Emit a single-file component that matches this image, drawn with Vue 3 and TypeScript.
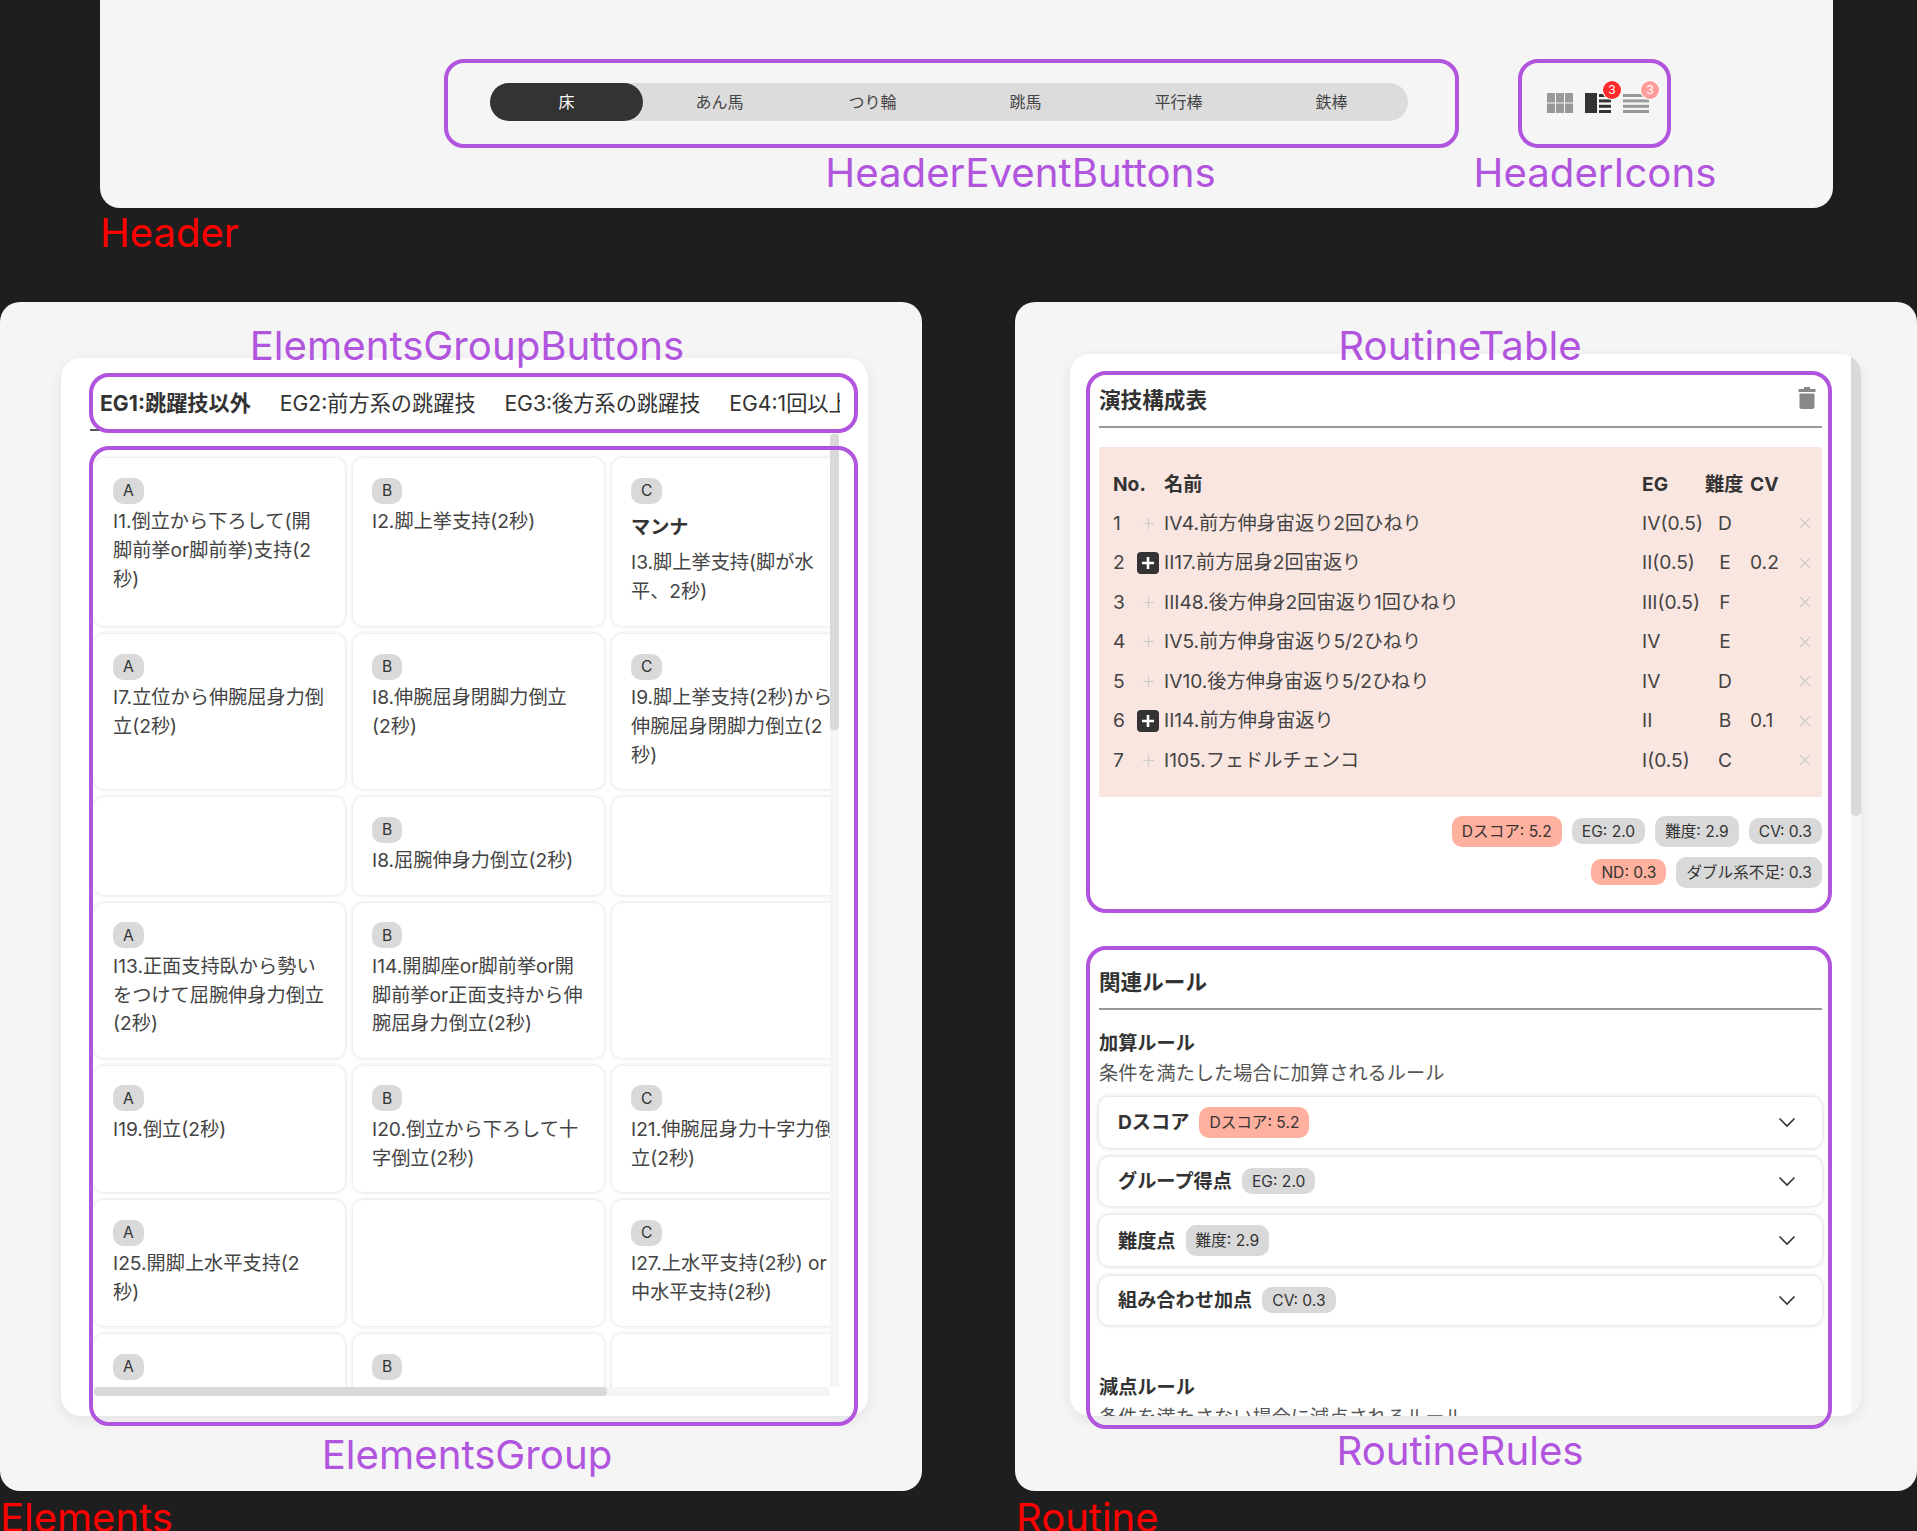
<script setup lang="ts">
// Gymnastics routine editor, annotated wireframe: panels plus purple/red callouts on top.
interface Skill {
  grade: string;
  text: string;
  name?: string;
}
interface RoutineRow {
  no: number;
  linked: boolean;
  name: string;
  eg: string;
  diff: string;
  cv: string;
}
interface Chip {
  label: string;
  hot?: boolean;
  tall?: boolean;
}

const events = ['床', 'あん馬', 'つり輪', '跳馬', '平行棒', '鉄棒'];
const tabs = ['EG1:跳躍技以外', 'EG2:前方系の跳躍技', 'EG3:後方系の跳躍技', 'EG4:1回以上のひねりを伴う技'];

const skillRows: (Skill | null)[][] = [
  [
    { grade: 'A', text: 'I1.倒立から下ろして(開脚前挙or脚前挙)支持(2秒)' },
    { grade: 'B', text: 'I2.脚上挙支持(2秒)' },
    { grade: 'C', name: 'マンナ', text: 'I3.脚上挙支持(脚が水平、2秒)' },
  ],
  [
    { grade: 'A', text: 'I7.立位から伸腕屈身力倒立(2秒)' },
    { grade: 'B', text: 'I8.伸腕屈身閉脚力倒立(2秒)' },
    { grade: 'C', text: 'I9.脚上挙支持(2秒)から伸腕屈身閉脚力倒立(2秒)' },
  ],
  [null, { grade: 'B', text: 'I8.屈腕伸身力倒立(2秒)' }, null],
  [
    { grade: 'A', text: 'I13.正面支持臥から勢いをつけて屈腕伸身力倒立(2秒)' },
    { grade: 'B', text: 'I14.開脚座or脚前挙or開脚前挙or正面支持から伸腕屈身力倒立(2秒)' },
    null,
  ],
  [
    { grade: 'A', text: 'I19.倒立(2秒)' },
    { grade: 'B', text: 'I20.倒立から下ろして十字倒立(2秒)' },
    { grade: 'C', text: 'I21.伸腕屈身力十字力倒立(2秒)' },
  ],
  [
    { grade: 'A', text: 'I25.開脚上水平支持(2秒)' },
    null,
    { grade: 'C', text: 'I27.上水平支持(2秒) or 中水平支持(2秒)' },
  ],
  [{ grade: 'A', text: '' }, { grade: 'B', text: '' }, null],
];

const routine: RoutineRow[] = [
  { no: 1, linked: false, name: 'IV4.前方伸身宙返り2回ひねり', eg: 'IV(0.5)', diff: 'D', cv: '' },
  { no: 2, linked: true, name: 'II17.前方屈身2回宙返り', eg: 'II(0.5)', diff: 'E', cv: '0.2' },
  { no: 3, linked: false, name: 'III48.後方伸身2回宙返り1回ひねり', eg: 'III(0.5)', diff: 'F', cv: '' },
  { no: 4, linked: false, name: 'IV5.前方伸身宙返り5/2ひねり', eg: 'IV', diff: 'E', cv: '' },
  { no: 5, linked: false, name: 'IV10.後方伸身宙返り5/2ひねり', eg: 'IV', diff: 'D', cv: '' },
  { no: 6, linked: true, name: 'II14.前方伸身宙返り', eg: 'II', diff: 'B', cv: '0.1' },
  { no: 7, linked: false, name: 'I105.フェドルチェンコ', eg: 'I(0.5)', diff: 'C', cv: '' },
];

const scoreChips: Chip[] = [
  { label: 'Dスコア: 5.2', hot: true, tall: true },
  { label: 'EG: 2.0' },
  { label: '難度: 2.9', tall: true },
  { label: 'CV: 0.3' },
];
const penaltyChips: Chip[] = [{ label: 'ND: 0.3', hot: true }, { label: 'ダブル系不足: 0.3', tall: true }];

const rules: { title: string; chip: Chip }[] = [
  { title: 'Dスコア', chip: scoreChips[0] },
  { title: 'グループ得点', chip: scoreChips[1] },
  { title: '難度点', chip: scoreChips[2] },
  { title: '組み合わせ加点', chip: scoreChips[3] },
];
</script>

<template>
  <div class="page">
    <header class="header">
      <nav class="events">
        <button v-for="(ev, i) in events" :key="ev" class="event" :class="{ active: i === 0 }">{{ ev }}</button>
      </nav>
      <div class="mode-icons">
        <svg class="mode" width="26" height="20" viewBox="0 0 26 20" fill="#999">
          <rect x="0" y="0" width="8" height="9.5" /><rect x="9" y="0" width="8" height="9.5" /><rect x="18" y="0" width="8" height="9.5" />
          <rect x="0" y="10.5" width="8" height="9.5" /><rect x="9" y="10.5" width="8" height="9.5" /><rect x="18" y="10.5" width="8" height="9.5" />
        </svg>
        <div class="mode-wrap">
          <svg class="mode" width="26" height="20" viewBox="0 0 26 20" fill="#333">
            <rect x="0" y="0" width="12" height="20" />
            <rect x="14" y="1" width="12" height="3" /><rect x="14" y="6.4" width="12" height="3" />
            <rect x="14" y="11.8" width="12" height="3" /><rect x="14" y="17" width="12" height="3" />
          </svg>
          <span class="count">3</span>
        </div>
        <div class="mode-wrap">
          <svg class="mode" width="26" height="20" viewBox="0 0 26 20" fill="#999">
            <rect x="0" y="1" width="26" height="3" /><rect x="0" y="6.4" width="26" height="3" />
            <rect x="0" y="11.8" width="26" height="3" /><rect x="0" y="17" width="26" height="3" />
          </svg>
          <span class="count soft">3</span>
        </div>
      </div>
    </header>

    <main class="columns">
      <section class="column left">
        <div class="panel elements">
          <div class="tabs">
            <button v-for="(tab, i) in tabs" :key="tab" class="tab" :class="{ active: i === 0 }">{{ tab }}</button>
          </div>
          <div class="skills-view">
            <div class="skills">
              <template v-for="(row, r) in skillRows" :key="r">
                <article v-for="(skill, c) in row" :key="c" class="skill" :class="{ tail: r === skillRows.length - 1 }">
                  <template v-if="skill">
                    <span class="chip grade">{{ skill.grade }}</span>
                    <h4 v-if="skill.name" class="skill-name">{{ skill.name }}</h4>
                    <p class="skill-text">{{ skill.text }}</p>
                  </template>
                </article>
              </template>
            </div>
            <div class="rail rail-y"><div class="thumb thumb-y" /></div>
            <div class="rail rail-x"><div class="thumb thumb-x" /></div>
          </div>
        </div>
      </section>

      <section class="column right">
        <div class="panel routine">
          <div class="section-head">
            <h2>演技構成表</h2>
            <svg class="trash" width="18" height="22" viewBox="0 0 18 22" fill="#888">
              <path d="M6 0h6v2h5.5v3H.5V2H6z" />
              <path d="M1.5 6.5h15V20a2 2 0 0 1-2 2h-11a2 2 0 0 1-2-2z" />
            </svg>
          </div>
          <div class="table-wrap">
            <table class="table">
              <colgroup>
                <col class="c-no" /><col class="c-plus" /><col /><col class="c-eg" /><col class="c-diff" /><col class="c-cv" /><col class="c-x" />
              </colgroup>
              <thead>
                <tr>
                  <th>No.</th>
                  <th />
                  <th>名前</th>
                  <th>EG</th>
                  <th>難度</th>
                  <th>CV</th>
                  <th />
                </tr>
              </thead>
              <tbody>
                <tr v-for="row in routine" :key="row.no">
                  <td>{{ row.no }}</td>
                  <td>
                    <span v-if="row.linked" class="link on">
                      <svg width="12" height="12" viewBox="0 0 12 12"><path d="M6 0v12M0 6h12" stroke="#fff" stroke-width="2.6" /></svg>
                    </span>
                    <span v-else class="link">
                      <svg width="11" height="11" viewBox="0 0 11 11"><path d="M5.5 0v11M0 5.5h11" stroke="#ccc" stroke-width="1.2" /></svg>
                    </span>
                  </td>
                  <td class="name">{{ row.name }}</td>
                  <td>{{ row.eg }}</td>
                  <td class="diff">{{ row.diff }}</td>
                  <td>{{ row.cv }}</td>
                  <td>
                    <svg class="remove" width="12" height="12" viewBox="0 0 12 12"><path d="M1 1l10 10M11 1L1 11" stroke="#ccc" stroke-width="1.2" /></svg>
                  </td>
                </tr>
              </tbody>
            </table>
          </div>
          <div class="chips first">
            <span v-for="chip in scoreChips" :key="chip.label" class="chip" :class="{ hot: chip.hot, tall: chip.tall }">{{ chip.label }}</span>
          </div>
          <div class="chips">
            <span v-for="chip in penaltyChips" :key="chip.label" class="chip" :class="{ hot: chip.hot, tall: chip.tall }">{{ chip.label }}</span>
          </div>

          <div class="section-head rules-head">
            <h2>関連ルール</h2>
          </div>
          <h3 class="rule-title">加算ルール</h3>
          <p class="rule-desc">条件を満たした場合に加算されるルール</p>
          <div class="accordion">
            <div v-for="rule in rules" :key="rule.title" class="acc-row">
              <strong>{{ rule.title }}</strong>
              <span class="chip" :class="{ hot: rule.chip.hot, tall: rule.chip.tall }">{{ rule.chip.label }}</span>
              <svg class="chevron" width="18" height="11" viewBox="0 0 18 11" fill="none">
                <path d="M1.5 1.5L9 9l7.5-7.5" stroke="#333" stroke-width="1.6" />
              </svg>
            </div>
          </div>
          <h3 class="rule-title minus">減点ルール</h3>
          <p class="rule-desc">条件を満たさない場合に減点されるルール</p>
          <div class="rail rail-page"><div class="thumb thumb-page" /></div>
        </div>
      </section>
    </main>

    <!-- callouts over the UI -->
    <div class="frame f-events" />
    <div class="frame f-icons" />
    <div class="frame f-tabs" />
    <div class="frame f-group" />
    <div class="frame f-table" />
    <div class="frame f-rules" />
    <span class="note n-events">HeaderEventButtons</span>
    <span class="note n-icons">HeaderIcons</span>
    <span class="note n-tabs">ElementsGroupButtons</span>
    <span class="note n-group">ElementsGroup</span>
    <span class="note n-table">RoutineTable</span>
    <span class="note n-rules">RoutineRules</span>
    <span class="area a-header">Header</span>
    <span class="area a-elements">Elements</span>
    <span class="area a-routine">Routine</span>
  </div>
</template>

<style>
html, body { margin: 0; background: #1e1e1e; }
</style>

<style scoped>
.page {
  position: relative;
  width: 1917px;
  height: 1531px;
  overflow: hidden;
  background: #1e1e1e;
  color: #333;
  font-family: Inter, "Noto Sans CJK JP", sans-serif;
  font-size: 19.2px;
  line-height: 28.8px;
}
h2, h3, h4, p { margin: 0; }
button { font: inherit; border: 0; background: none; color: inherit; padding: 0; }

.header {
  display: flex;
  align-items: flex-start;
  box-sizing: border-box;
  width: 1733px;
  height: 208px;
  margin-left: 100px;
  padding: 83px 0 0 390px;
  background: #f5f5f5;
  border-radius: 0 0 20px 20px;
}
.events {
  display: flex;
  width: 918px;
  height: 38px;
  background: #dcdcdc;
  border-radius: 19px;
}
.event {
  flex: 1;
  font-size: 16px;
  line-height: 38px;
  color: #444;
  border-radius: 19px;
}
.event.active { background: #333; color: #fff; }

.mode-icons {
  display: flex;
  gap: 12px;
  margin: 10px 0 0 139px;
}
.mode { display: block; }
.mode-wrap { position: relative; }
.count {
  position: absolute;
  top: -12px;
  right: -10px;
  width: 18px;
  height: 18px;
  border-radius: 50%;
  background: #ff2a2a;
  box-shadow: 0 0 0 1px #fff;
  color: #fff;
  font-size: 12px;
  line-height: 18px;
  text-align: center;
}
.count.soft { background: #ff9d9a; }

.columns {
  display: flex;
  justify-content: space-between;
  margin-top: 94px;
}
.column {
  box-sizing: border-box;
  height: 1188.5px;
  background: #f5f5f5;
  border-radius: 20px;
}
.column.left { width: 922px; padding: 56px 54px 74px 61px; }
.column.right { width: 902px; padding: 52px 56px 74px 55px; }

.panel {
  box-sizing: border-box;
  background: #fff;
  border-radius: 20px;
  box-shadow: 0 4px 14px rgba(0, 0, 0, 0.08);
}

.elements {
  display: flex;
  flex-direction: column;
  height: 1058px;
  padding-left: 29px;
}
.tabs {
  display: flex;
  flex: none;
  gap: 9.6px;
  width: 750px;
  padding-top: 24px;
  overflow: hidden;
}
.tab {
  flex: none;
  box-sizing: border-box;
  height: 49px;
  padding: 0 9.6px 5px;
  font-size: 21.2px;
  line-height: 30px;
  border-bottom: 2px solid transparent;
}
.tab:first-child { padding-left: 10px; }
.tab.active { font-weight: 700; border-bottom-color: #555; }

.skills-view {
  position: relative;
  flex: none;
  width: 745px;
  height: 962px;
  margin: 3px 0 0 4px;
  overflow: hidden;
}
.skills {
  display: grid;
  grid-template-columns: repeat(3, 251px);
  gap: 8px;
  padding-top: 24px;
}
.skill {
  box-sizing: border-box;
  padding: 19.5px 20.5px 19.6px 19px;
  background: #fff;
  border-radius: 10px;
  box-shadow: 0 0 4px rgba(0, 0, 0, 0.16);
}
.skill.tail { min-height: 126px; }
.chip {
  display: inline-block;
  padding: 3.5px 10px;
  border-radius: 10px;
  background: #d9d9d9;
  color: #333;
  font-size: 15.6px;
  line-height: 19px;
  white-space: nowrap;
}
.chip.tall { padding: 6px 10px; }
.chip.hot { background: #ffb09e; }
.grade { display: block; width: fit-content; margin-bottom: 3.5px; }
.skill-name { font-size: 19.2px; font-weight: 700; margin: 9px 0 7px; }
.skill-name + .skill-text { margin-bottom: 1px; }
.skill-text { color: #444; }

.rail { position: absolute; background: #f5f5f5; }
.thumb { background: #d9d9d9; border-radius: 4px; }
.rail-y { top: 0; right: 0; bottom: 9px; width: 9px; }
.rail-x { left: 0; right: 9px; bottom: 0; height: 9px; }
.thumb-y { height: 296px; }
.thumb-x { width: 513px; height: 9px; }
.rail-page { top: 0; right: 0; bottom: 0; width: 10px; }
.thumb-page { height: 462px; border-radius: 5px; }

.routine {
  position: relative;
  width: 791px;
  height: 1062px;
  padding: 30px 39px 0 29px;
  overflow: hidden;
}
.section-head {
  display: flex;
  justify-content: space-between;
  align-items: flex-start;
  padding-bottom: 10px;
  border-bottom: 2px solid #999;
}
.section-head h2 { font-size: 21.6px; font-weight: 700; line-height: 32.4px; }
.trash { margin: 3px 6px 0 0; }
.rules-head { margin-top: 78px; }

.table-wrap {
  margin-top: 19px;
  padding: 17px 9px 17px 14px;
  background: #fae6e1;
}
.table {
  width: 100%;
  table-layout: fixed;
  border-collapse: collapse;
}
.c-no { width: 24px; }
.c-plus { width: 27px; }
.c-eg { width: 63px; }
.c-diff { width: 45px; }
.c-cv { width: 45px; }
.c-x { width: 18px; }
.table th {
  height: 39px;
  padding: 0;
  font-weight: 700;
  text-align: left;
  white-space: nowrap;
}
.table td {
  height: 39.5px;
  padding: 0;
  color: #444;
  white-space: nowrap;
}
.table .diff { text-align: center; padding-right: 5px; }
.link { display: flex; width: 22px; height: 22px; align-items: center; justify-content: center; border-radius: 4px; }
.link.on { background: #333; }
.remove { display: block; margin-left: 4px; }

.chips {
  display: flex;
  justify-content: flex-end;
  align-items: center;
  gap: 10px;
  margin-top: 10px;
}
.chips.first { margin-top: 19px; }

.rule-title { margin-top: 18.6px; font-size: 19.2px; font-weight: 700; }
.rule-title.minus { margin-top: 48px; }
.rule-desc { margin-top: 1px; color: #555; }
.accordion {
  display: flex;
  flex-direction: column;
  gap: 9.6px;
  margin-top: 9px;
}
.acc-row {
  display: flex;
  align-items: center;
  gap: 10px;
  padding: 10px 26px 10px 19px;
  border-radius: 10px;
  box-shadow: 0 0 5px rgba(0, 0, 0, 0.2);
}
.chevron { margin-left: auto; }

/* annotation layer */
.frame {
  position: absolute;
  box-sizing: border-box;
  border: 4.5px solid #b155de;
  border-radius: 20px;
}
.f-events { left: 444px; top: 59px; width: 1015px; height: 89px; }
.f-icons { left: 1518px; top: 59px; width: 153px; height: 89px; }
.f-tabs { left: 89px; top: 373px; width: 769px; height: 60px; }
.f-group { left: 89px; top: 446px; width: 769px; height: 980px; }
.f-table { left: 1086px; top: 371px; width: 746px; height: 542px; }
.f-rules { left: 1086px; top: 946px; width: 746px; height: 483px; }

.note, .area {
  position: absolute;
  font-size: 40.2px;
  line-height: 40px;
  white-space: nowrap;
}
.note { color: #b155de; transform: translateX(-50%); }
.area { color: #ff0000; font-size: 40px; }
.n-events { left: 1020.5px; top: 152.5px; }
.n-icons { left: 1595px; top: 152.5px; }
.n-tabs { left: 467px; top: 325.5px; }
.n-group { left: 467px; top: 1435px; }
.n-table { left: 1460px; top: 325.5px; }
.n-rules { left: 1460px; top: 1430.5px; }
.a-header { left: 100px; top: 212.5px; }
.a-elements { left: 0; top: 1497.5px; }
.a-routine { left: 1016px; top: 1497.5px; }
</style>
